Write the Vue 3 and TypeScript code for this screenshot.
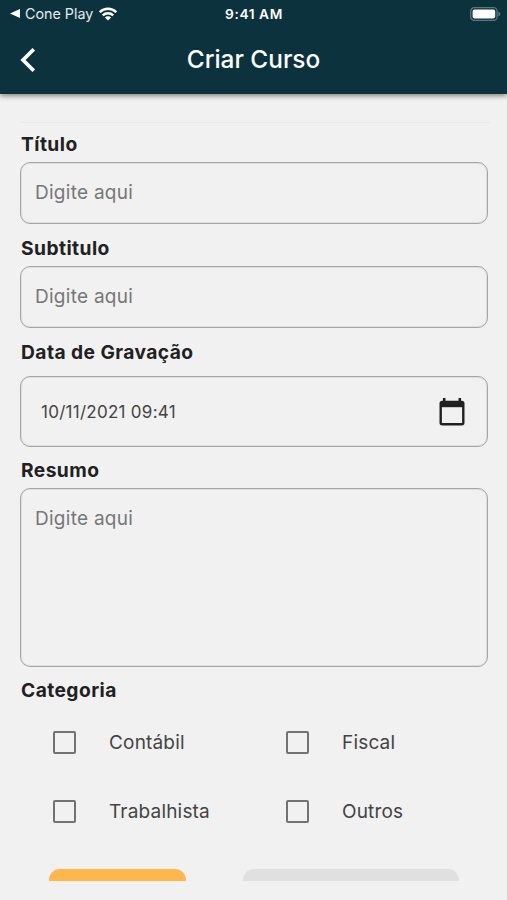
<script setup lang="ts">
import { ref } from 'vue'

interface Category {
  name: string
  checked: boolean
}

const title = ref('')
const subtitle = ref('')
const summary = ref('')
const recordedAt = ref('10/11/2021 09:41')
const categories = ref<Category[]>([
  { name: 'Contábil', checked: false },
  { name: 'Fiscal', checked: false },
  { name: 'Trabalhista', checked: false },
  { name: 'Outros', checked: false },
])
</script>

<template>
  <div class="screen">
    <header class="header">
      <div class="status">
        <div class="return">
          <svg class="return-arrow" viewBox="0 0 10 9"><path d="M0 4.5 10 0v9z" fill="#fff" /></svg>
          <span class="app-name">Cone Play</span>
          <svg class="wifi" viewBox="0 0 18 14">
            <g fill="none" stroke="#fff" stroke-width="2.5">
              <path d="M.8 5.2a11.6 11.6 0 0 1 16.4 0" />
              <path d="M3.8 8.4a7.4 7.4 0 0 1 10.4 0" />
            </g>
            <path d="M9 13.6 5.9 10.5a4.4 4.4 0 0 1 6.2 0z" fill="#fff" />
          </svg>
        </div>
        <span class="clock">9:41 AM</span>
        <svg class="battery" viewBox="0 0 31 14">
          <rect x=".7" y=".7" width="26.4" height="12.6" rx="3.6" fill="none" stroke="#5b777c" stroke-width="1.3" />
          <rect x="2.6" y="2.6" width="22.6" height="8.8" rx="1.8" fill="#fff" />
          <path d="M28.4 4.5q2 1 2 2.5t-2 2.5z" fill="#5b777c" />
        </svg>
      </div>
      <div class="toolbar">
        <button class="back" aria-label="Voltar">
          <svg viewBox="0 0 16 26"><path d="M13.8 2.2 3 13l10.8 10.8" fill="none" stroke="#fff" stroke-width="3.7" /></svg>
        </button>
        <h1 class="heading">Criar Curso</h1>
      </div>
    </header>

    <main class="form">
      <label class="label" for="title">Título</label>
      <input id="title" v-model="title" class="field" placeholder="Digite aqui" />

      <label class="label" for="subtitle">Subtitulo</label>
      <input id="subtitle" v-model="subtitle" class="field" placeholder="Digite aqui" />

      <span class="label">Data de Gravação</span>
      <div class="field date">
        <span>{{ recordedAt }}</span>
        <svg class="calendar" viewBox="0 0 26 28">
          <path d="M5.2 0v4M20.8 0v4" stroke="#212121" stroke-width="2.6" />
          <rect x="1.7" y="4" width="22.6" height="22.2" rx="1.5" fill="none" stroke="#212121" stroke-width="2.4" />
          <path d="M1.5 4h23v5.2h-23z" fill="#212121" />
        </svg>
      </div>

      <label class="label" for="summary">Resumo</label>
      <textarea id="summary" v-model="summary" class="field summary" placeholder="Digite aqui"></textarea>

      <span class="label">Categoria</span>
      <div class="categories">
        <label v-for="category in categories" :key="category.name" class="category">
          <input v-model="category.checked" type="checkbox" class="checkbox" />
          <span>{{ category.name }}</span>
        </label>
      </div>
      <div class="actions">
        <button class="action primary"></button>
        <button class="action secondary"></button>
      </div>
    </main>
  </div>
</template>

<style>
body {
  background: #f1f1f1;
}
</style>

<style scoped>
.screen,
.screen * {
  box-sizing: border-box;
}
.screen {
  height: 900px;
  overflow: hidden;
  background: #f1f1f1;
  color: #212121;
  font-family: Inter, 'Liberation Sans', sans-serif;
}
.header {
  height: 94px;
  background: #0c333d;
  box-shadow: 0 2px 5px rgba(0, 0, 0, 0.45);
  color: #fff;
}
.status {
  display: grid;
  grid-template-columns: 1fr auto 1fr;
  align-items: center;
  height: 27px;
  padding: 0 6px 0 10px;
}
.return {
  display: flex;
  align-items: center;
}
.return-arrow {
  width: 10px;
  height: 9px;
}
.app-name {
  margin-left: 5px;
  color: #e3eaec;
  font-size: 14.3px;
}
.wifi {
  width: 18px;
  height: 14px;
  margin-left: 6px;
}
.clock {
  margin-right: 3px;
  font-size: 13.7px;
  font-weight: 600;
  letter-spacing: 0.6px;
}
.battery {
  justify-self: end;
  width: 31px;
  height: 14px;
}
.toolbar {
  display: grid;
  grid-template-columns: 40px 1fr 40px;
  align-items: center;
  height: 66px;
  padding: 0 8px 0 8px;
}
.back {
  display: flex;
  padding: 0 0 0 12px;
  border: 0;
  background: none;
}
.back svg {
  width: 16px;
  height: 26px;
}
.heading {
  margin: 0;
  padding-bottom: 2px;
  font-size: 24.4px;
  font-weight: 500;
  text-align: center;
}
.form {
  display: flex;
  flex-direction: column;
  height: 759px;
  margin: 28px 17px 0 20px;
  padding-top: 1px;
  overflow: hidden;
  border-top: 1px solid #e9e9e9;
}
.label {
  flex: none;
  height: 38px;
  padding-left: 1px;
  font-size: 19.2px;
  font-weight: 700;
  letter-spacing: 0.44px;
  line-height: 41px;
}
.field {
  flex: none;
  width: 468px;
  height: 62px;
  margin: 0 0 4px;
  padding: 0 14px 2px;
  border: 1px solid #a6a6a6;
  border-radius: 10px;
  outline: none;
  box-shadow: inset 0 0 0 1px rgba(0, 0, 0, 0.08);
  background: transparent;
  color: #444;
  font-family: inherit;
  font-size: 19px;
  letter-spacing: 0.27px;
}
.field::placeholder {
  color: #777;
  opacity: 1;
}
.date {
  display: flex;
  align-items: center;
  justify-content: space-between;
  height: 71px;
  margin: 6px 0 3px;
  padding: 0 22px 0 20px;
  font-size: 17px;
}
.calendar {
  width: 26px;
  height: 28px;
}
.summary {
  height: 179px;
  margin-bottom: 3px;
  padding-top: 18px;
  resize: none;
}
.categories {
  display: grid;
  flex: none;
  grid-template-columns: 233px 1fr;
  grid-auto-rows: 69px;
}
.category {
  display: flex;
  align-items: center;
  gap: 33px;
  padding-left: 33px;
  color: #444;
  font-size: 19px;
  letter-spacing: 0.18px;
}
.checkbox {
  appearance: none;
  width: 23px;
  height: 23px;
  margin: 0;
  border: 2.5px solid #727272;
  border-radius: 2px;
}
.actions {
  display: flex;
  flex: none;
  gap: 57px;
  margin: 23px 0 0 29px;
}
.action {
  height: 60px;
  padding: 0;
  border: 0;
  border-radius: 11px;
}
.primary {
  width: 137px;
  background: #ffb74d;
}
.secondary {
  width: 216px;
  background: #e0e0e0;
}
</style>
